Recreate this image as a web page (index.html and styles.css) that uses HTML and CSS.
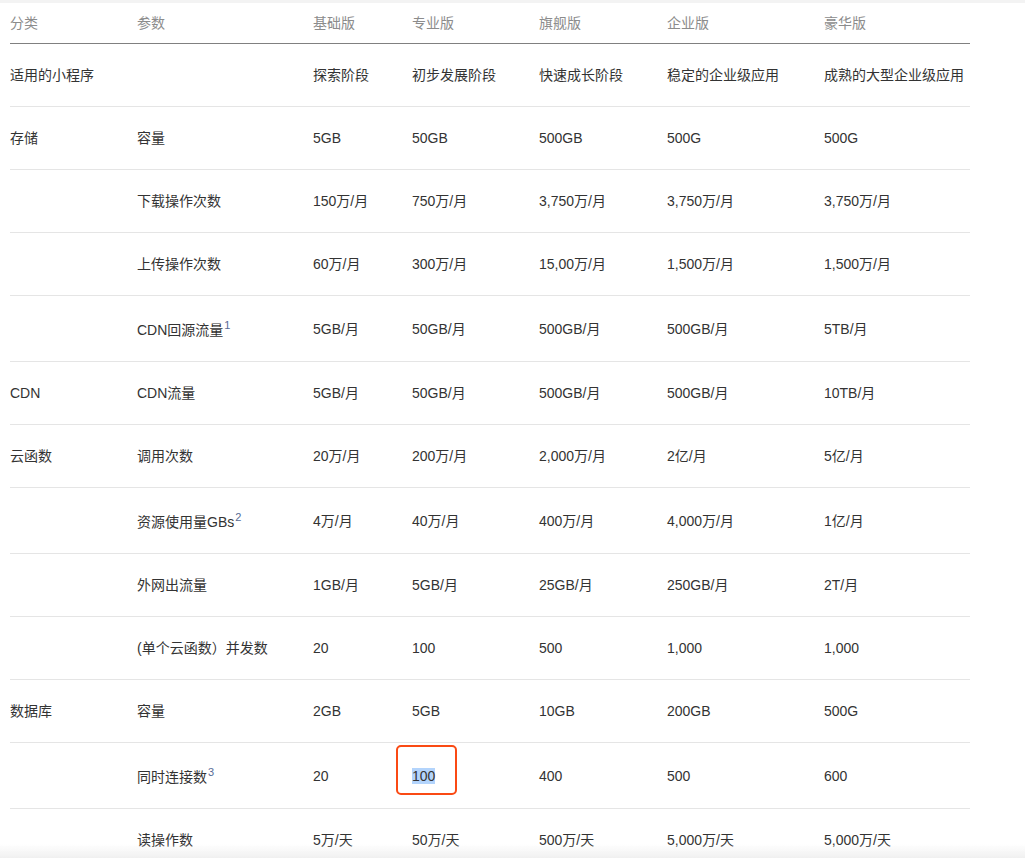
FILE: index.html
```html
<!DOCTYPE html>
<html lang="zh-CN">
<head>
<meta charset="utf-8">
<title>云开发配额</title>
<link rel="stylesheet" href="styles.css">
</head>
<body>
<div class="topbar"></div>
<div class="wrap">
<table class="quota">
  <colgroup>
    <col class="c1"><col class="c2"><col class="c3"><col class="c4"><col class="c5"><col class="c6"><col class="c7">
  </colgroup>
  <thead>
    <tr><th>分类</th><th>参数</th><th>基础版</th><th>专业版</th><th>旗舰版</th><th>企业版</th><th>豪华版</th></tr>
  </thead>
  <tbody>
    <tr><td>适用的小程序</td><td></td><td>探索阶段</td><td>初步发展阶段</td><td>快速成长阶段</td><td>稳定的企业级应用</td><td>成熟的大型企业级应用</td></tr>
    <tr><td>存储</td><td>容量</td><td>5GB</td><td>50GB</td><td>500GB</td><td>500G</td><td>500G</td></tr>
    <tr><td></td><td>下载操作次数</td><td>150万/月</td><td>750万/月</td><td>3,750万/月</td><td>3,750万/月</td><td>3,750万/月</td></tr>
    <tr><td></td><td>上传操作次数</td><td>60万/月</td><td>300万/月</td><td>15,00万/月</td><td>1,500万/月</td><td>1,500万/月</td></tr>
    <tr><td></td><td>CDN回源流量<sup>1</sup></td><td>5GB/月</td><td>50GB/月</td><td>500GB/月</td><td>500GB/月</td><td>5TB/月</td></tr>
    <tr><td>CDN</td><td>CDN流量</td><td>5GB/月</td><td>50GB/月</td><td>500GB/月</td><td>500GB/月</td><td>10TB/月</td></tr>
    <tr><td>云函数</td><td>调用次数</td><td>20万/月</td><td>200万/月</td><td>2,000万/月</td><td>2亿/月</td><td>5亿/月</td></tr>
    <tr><td></td><td>资源使用量GBs<sup>2</sup></td><td>4万/月</td><td>40万/月</td><td>400万/月</td><td>4,000万/月</td><td>1亿/月</td></tr>
    <tr><td></td><td>外网出流量</td><td>1GB/月</td><td>5GB/月</td><td>25GB/月</td><td>250GB/月</td><td>2T/月</td></tr>
    <tr><td></td><td>(单个云函数）并发数</td><td>20</td><td>100</td><td>500</td><td>1,000</td><td>1,000</td></tr>
    <tr><td>数据库</td><td>容量</td><td>2GB</td><td>5GB</td><td>10GB</td><td>200GB</td><td>500G</td></tr>
    <tr><td></td><td>同时连接数<sup>3</sup></td><td>20</td><td><span class="mark"><span class="sel">100</span><span class="ring"></span></span></td><td>400</td><td>500</td><td>600</td></tr>
    <tr><td></td><td>读操作数</td><td>5万/天</td><td>50万/天</td><td>500万/天</td><td>5,000万/天</td><td>5,000万/天</td></tr>
  </tbody>
</table>
</div>
<div class="fade"></div>
</body>
</html>
```

FILE: styles.css
```css
html, body {
  margin: 0;
  padding: 0;
  background: #fff;
}
body {
  font-family: "Liberation Sans", "Noto Sans CJK SC", sans-serif;
  font-size: 14px;
  color: #333;
}
.topbar {
  height: 3px;
  background: #f3f3f3;
}
.wrap {
  padding-left: 10px;
}
.quota {
  width: 960px;
  table-layout: fixed;
  border-collapse: collapse;
  border-spacing: 0;
}
.c1 { width: 127px; }
.c2 { width: 176px; }
.c3 { width: 99px; }
.c4 { width: 127px; }
.c5 { width: 128px; }
.c6 { width: 157px; }
.c7 { width: 146px; }
.quota th {
  text-align: left;
  font-weight: normal;
  color: #8c8c8c;
  line-height: 22px;
  padding: 9px 0 9px;
  border-bottom: 1px solid #808080;
}
.quota td {
  line-height: 22px;
  padding: 20px 0;
  border-bottom: 1px solid #e5e5e5;
  white-space: nowrap;
}
.quota tbody tr:last-child td {
  border-bottom: none;
}
.quota sup {
  font-size: 11px;
  line-height: 18px;
  color: #576b95;
  vertical-align: 6px;
  margin-left: 1px;
}
.mark {
  position: relative;
  display: inline-block;
}
.sel {
  background: #b3d4fc;
}
.ring {
  position: absolute;
  left: -16px;
  right: -22px;
  top: -20px;
  bottom: -8px;
  border: 2px solid #fa4a14;
  border-radius: 5px;
}
.fade {
  position: fixed;
  left: 0;
  right: 0;
  bottom: 0;
  height: 14px;
  background: linear-gradient(to bottom, rgba(245,245,245,0), #f0f0f0);
  pointer-events: none;
}
```
